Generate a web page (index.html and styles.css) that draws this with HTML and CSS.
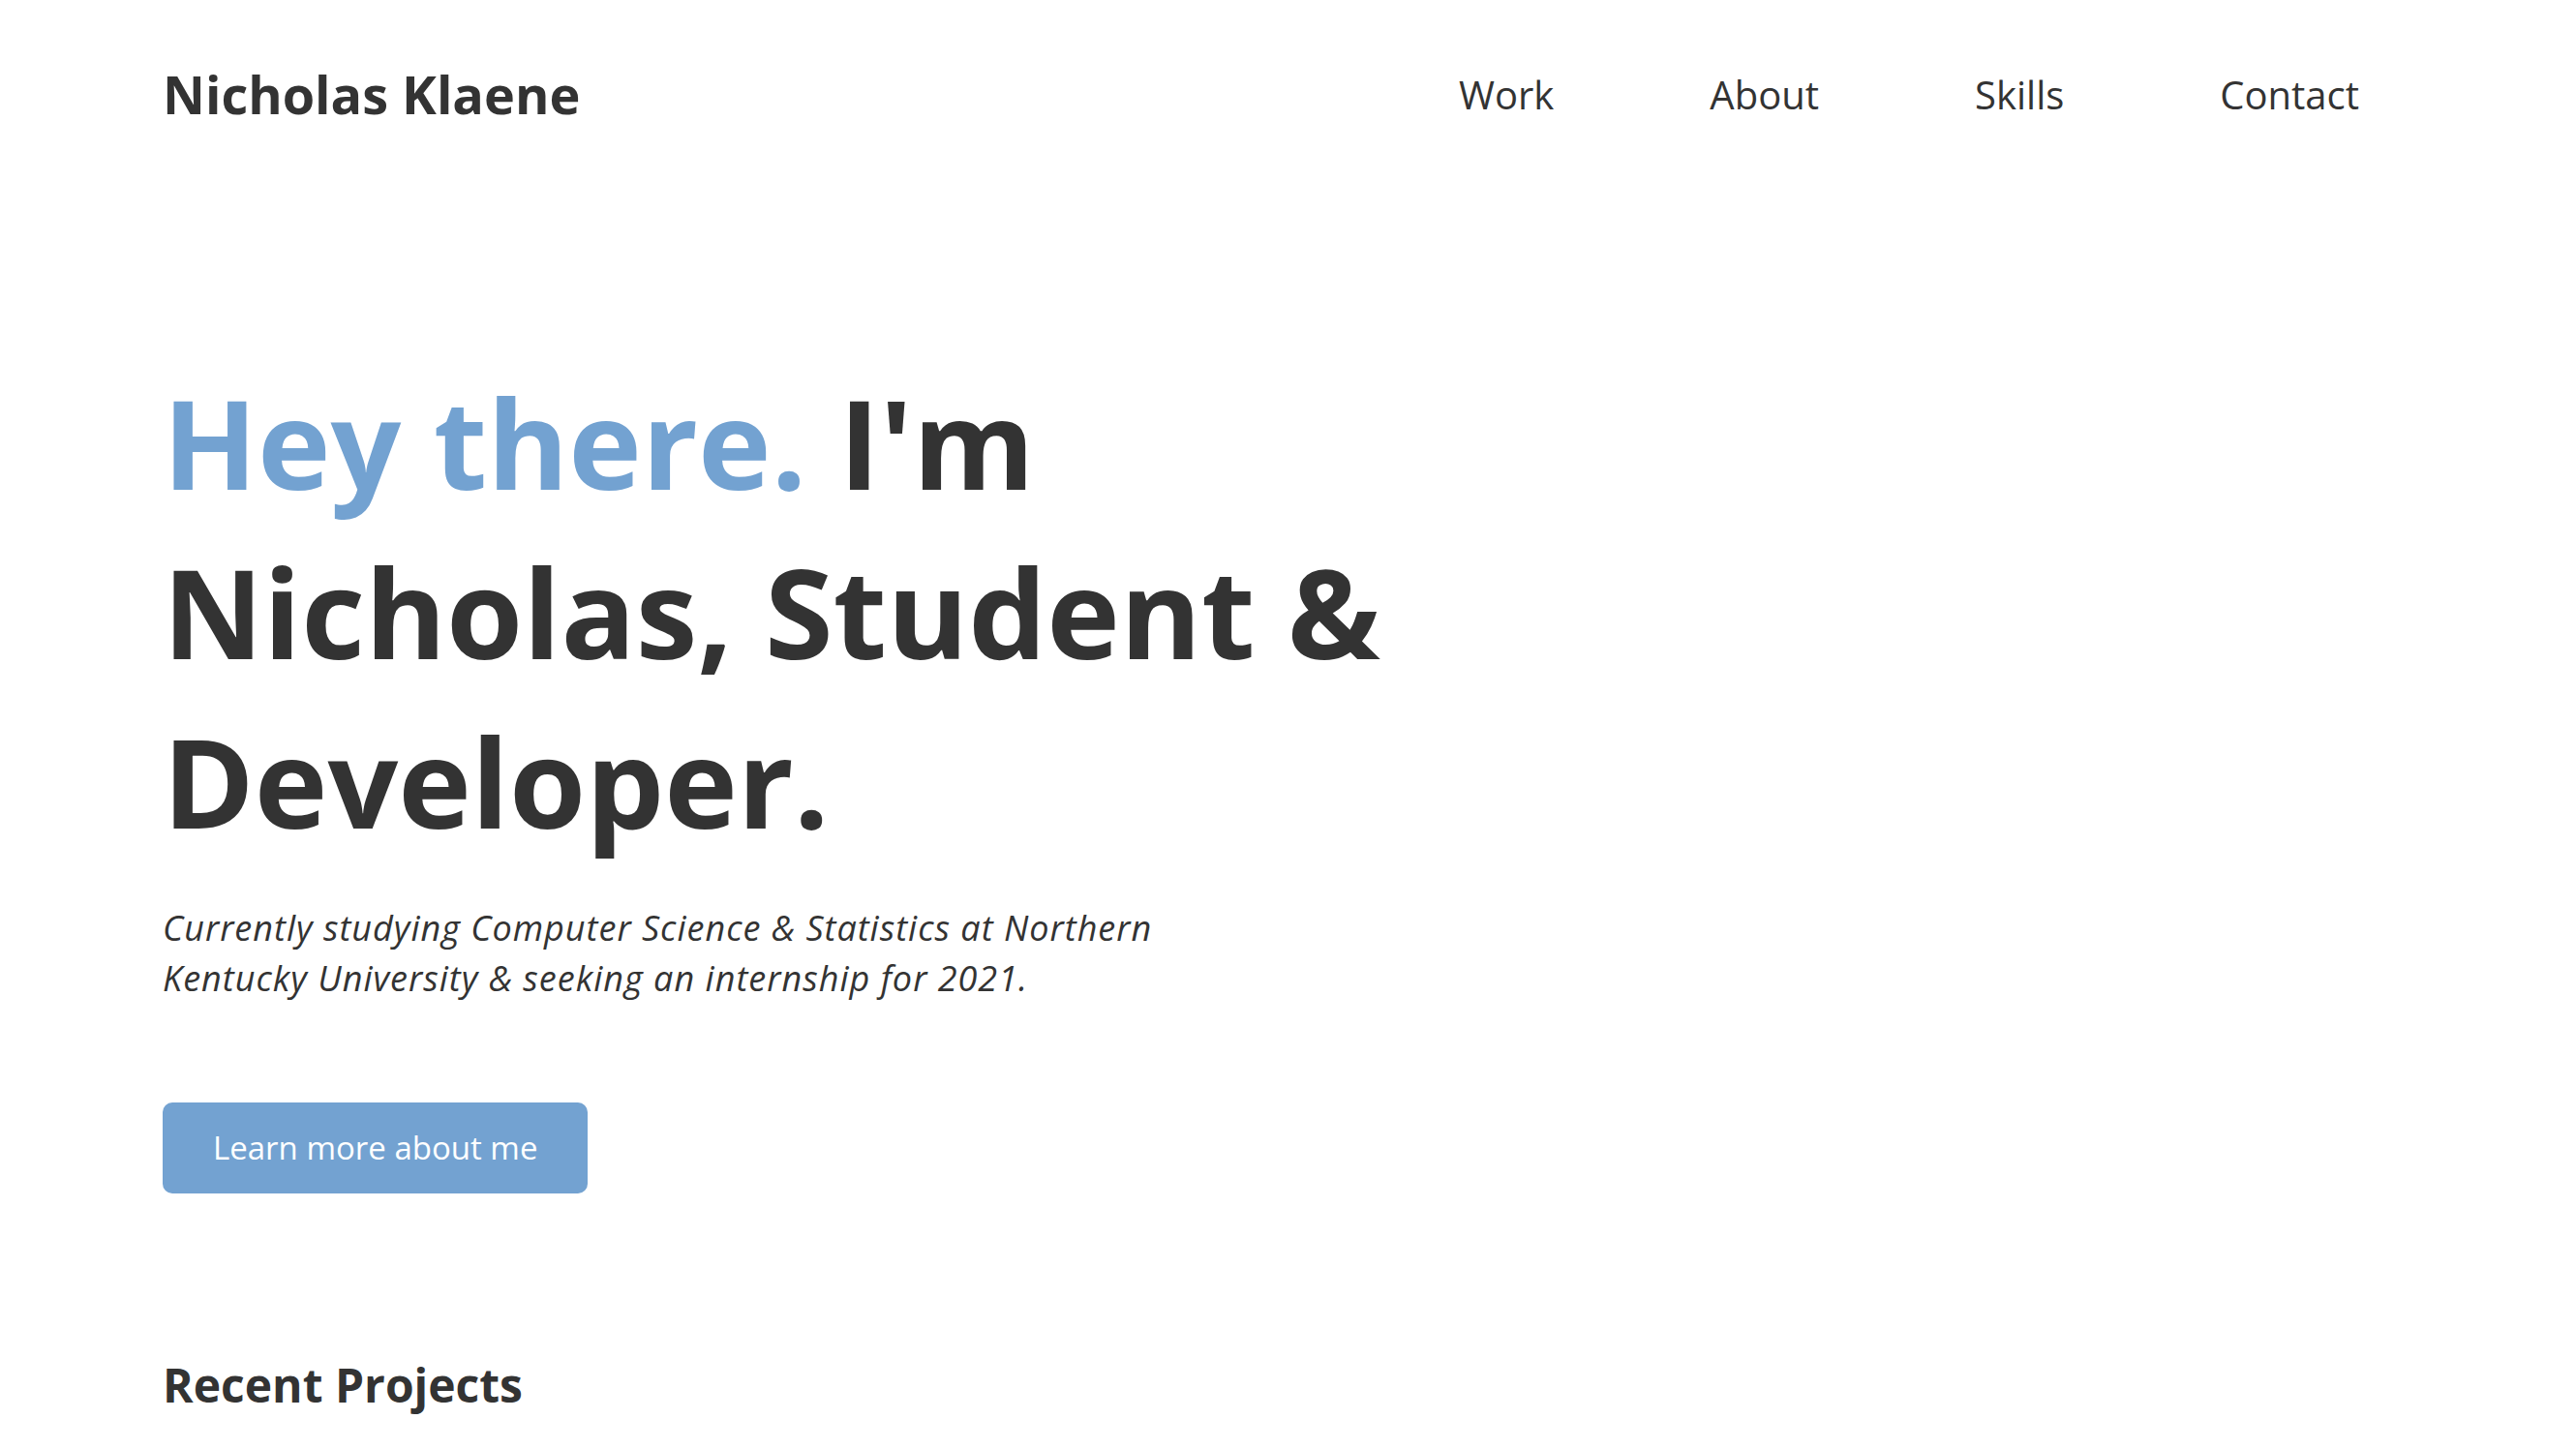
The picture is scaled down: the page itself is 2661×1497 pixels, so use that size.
FILE: index.html
```html
<!DOCTYPE html>
<html lang="en">
<head>
<meta charset="utf-8">
<title>Nicholas Klaene</title>
<link rel="stylesheet" href="styles.css">
</head>
<body>
<header class="site-header">
  <a class="logo" href="#">Nicholas Klaene</a>
  <nav class="nav">
    <a href="#work">Work</a>
    <a href="#about">About</a>
    <a href="#skills">Skills</a>
    <a href="#contact">Contact</a>
  </nav>
</header>
<main class="main">
  <section class="hero">
    <h1 class="hero-title"><span class="accent">Hey there.</span> I'm Nicholas, Student &amp; Developer.</h1>
    <p class="hero-text">Currently studying Computer Science &amp; Statistics at Northern Kentucky University &amp; seeking an internship for 2021.</p>
    <a class="btn" href="#about">Learn more about me</a>
  </section>
  <section class="projects">
    <h2 class="section-title">Recent Projects</h2>
  </section>
</main>
</body>
</html>
```

FILE: styles.css
```css
* { box-sizing: border-box; }
html, body { margin: 0; padding: 0; background: #fff; }
body {
  font-family: "Open Sans", "Noto Sans", sans-serif;
  color: #333;
  overflow: hidden;
}
a { text-decoration: none; color: inherit; }

.site-header {
  display: flex;
  align-items: center;
  justify-content: space-between;
  padding: 60px 224px 0 168px;
}
.logo {
  font-size: 54px;
  font-weight: 700;
  line-height: normal;
}
.nav {
  display: flex;
  gap: 161px;
}
.nav a {
  font-size: 40px;
  font-weight: 500;
  line-height: normal;
}

.main { padding: 0 168px; }
.hero { padding-top: 235px; }
.hero-title {
  margin: 0;
  max-width: 1400px;
  font-size: 128px;
  font-weight: 700;
  line-height: 175px;
}
.accent { color: #73a2d1; }
.hero-text {
  margin: 39px 0 0;
  max-width: 1120px;
  font-size: 36px;
  font-style: italic;
  font-weight: 400;
  letter-spacing: 1px;
  line-height: 52px;
}
.btn {
  display: inline-block;
  margin-top: 102px;
  padding: 24px 52px 25px;
  background: #73a2d1;
  color: #fff;
  font-size: 33px;
  font-weight: 500;
  line-height: normal;
  border-radius: 10px;
}
.projects { padding-top: 165px; }
.section-title {
  margin: 0;
  font-size: 48px;
  font-weight: 700;
  line-height: normal;
}
```
